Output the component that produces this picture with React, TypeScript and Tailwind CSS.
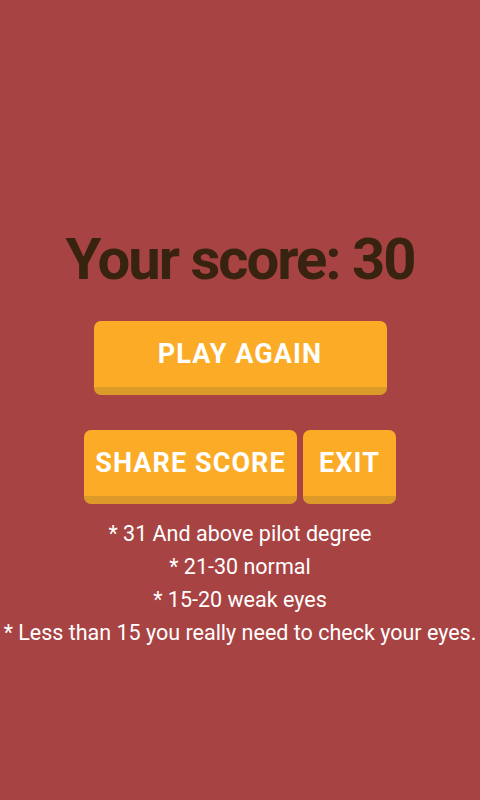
import React from "react";

const btn =
  "h-[74px] rounded-[7px] bg-[#fbab26] border-b-[8px] border-[#dc9b28] text-white font-bold text-[27px] tracking-[0.04em] flex items-center justify-center";

export default function App() {
  return (
    <div className="w-[480px] h-[800px] bg-[#a84343] flex flex-col items-center pt-[230px] font-['Roboto',sans-serif]">
      <h1 className="text-[58px] leading-[58px] font-bold tracking-[-2px] text-[#37230f]">Your score: 30</h1>

      <button className={`${btn} w-[293px] mt-[33px]`}>PLAY AGAIN</button>

      {/* share + exit row */}
      <div className="flex gap-[6px] mt-[35px]">
        <button className={`${btn} w-[213px]`}>SHARE SCORE</button>
        <button className={`${btn} w-[93px]`}>EXIT</button>
      </div>

      <div className="mt-[13px] text-white text-[21.5px] leading-[33px] text-center whitespace-nowrap">
        <p>* 31 And above pilot degree</p>
        <p>* 21-30 normal</p>
        <p>* 15-20 weak eyes</p>
        <p>* Less than 15 you really need to check your eyes.</p>
      </div>
    </div>
  );
}
